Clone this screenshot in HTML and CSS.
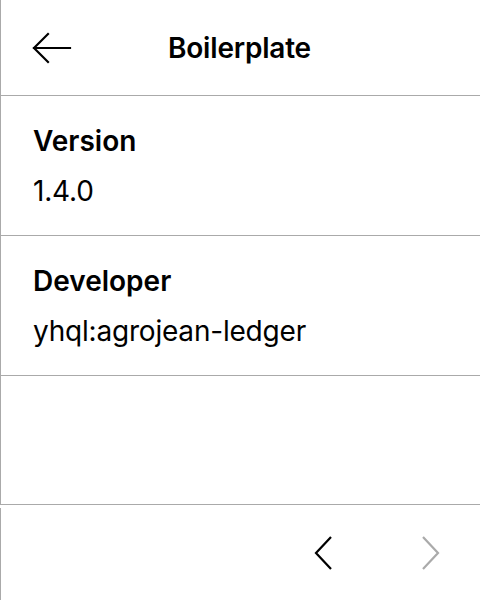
FILE: index.html
```html
<!DOCTYPE html>
<html>
<head>
<meta charset="utf-8">
<link rel="stylesheet" href="styles.css">
</head>
<body>
<div class="panel">
  <header class="header">
    <div class="back">
      <svg width="40" height="32" viewBox="0 0 40 32" fill="none" stroke="#000" stroke-width="2.2" stroke-linecap="square">
        <path d="M2 16 H38"/>
        <path d="M16 2 L2 16 L16 30"/>
      </svg>
    </div>
    <div class="title">Boilerplate</div>
    <div></div>
  </header>
  <section class="item">
    <div class="label">Version</div>
    <div class="value">1.4.0</div>
  </section>
  <section class="item">
    <div class="label">Developer</div>
    <div class="value">yhql:agrojean-ledger</div>
  </section>
  <div class="filler"></div>
</div>
<nav class="footer">
  <svg class="chev" width="20" height="34" viewBox="0 0 20 34" fill="none" stroke="#000" stroke-width="2.2">
    <path d="M18 1 L3 17 L18 33"/>
  </svg>
  <svg class="chev" width="20" height="34" viewBox="0 0 20 34" fill="none" stroke="#aaa" stroke-width="2.2">
    <path d="M2 1 L17 17 L2 33"/>
  </svg>
</nav>
</body>
</html>
```
FILE: styles.css
```css
html, body {
  margin: 0;
  padding: 0;
  background: #fff;
}
body {
  font-family: Inter, "Noto Sans", sans-serif;
  color: #000;
  width: 480px;
  height: 600px;
  overflow: hidden;
}
.panel {
  border-left: 1px solid #aaa;
  border-bottom: 1px solid #aaa;
  display: flex;
  flex-direction: column;
}
.header {
  height: 95px;
  border-bottom: 1px solid #aaa;
  display: grid;
  grid-template-columns: 1fr auto 1fr;
  align-items: center;
}
.back {
  padding-left: 31px;
  display: flex;
  align-items: center;
}
.back svg {
  display: block;
}
.title {
  font-size: 28px;
  font-weight: 600;
  line-height: 40px;
  letter-spacing: -0.2px;
  margin-left: -2px;
}
.item {
  height: 119px;
  padding: 20px 0 0 32px;
  border-bottom: 1px solid #aaa;
  font-size: 28px;
  line-height: 50px;
}
.label {
  font-weight: 600;
}
.value {
  font-weight: 400;
  letter-spacing: -0.2px;
}
.filler {
  height: 128px;
}
.footer {
  margin-top: 3px;
  border-left: 1px solid #aaa;
  height: 90px;
  padding-bottom: 2px;
  display: flex;
  align-items: center;
  padding-left: 312px;
  gap: 88px;
}
.chev {
  display: block;
}
```
